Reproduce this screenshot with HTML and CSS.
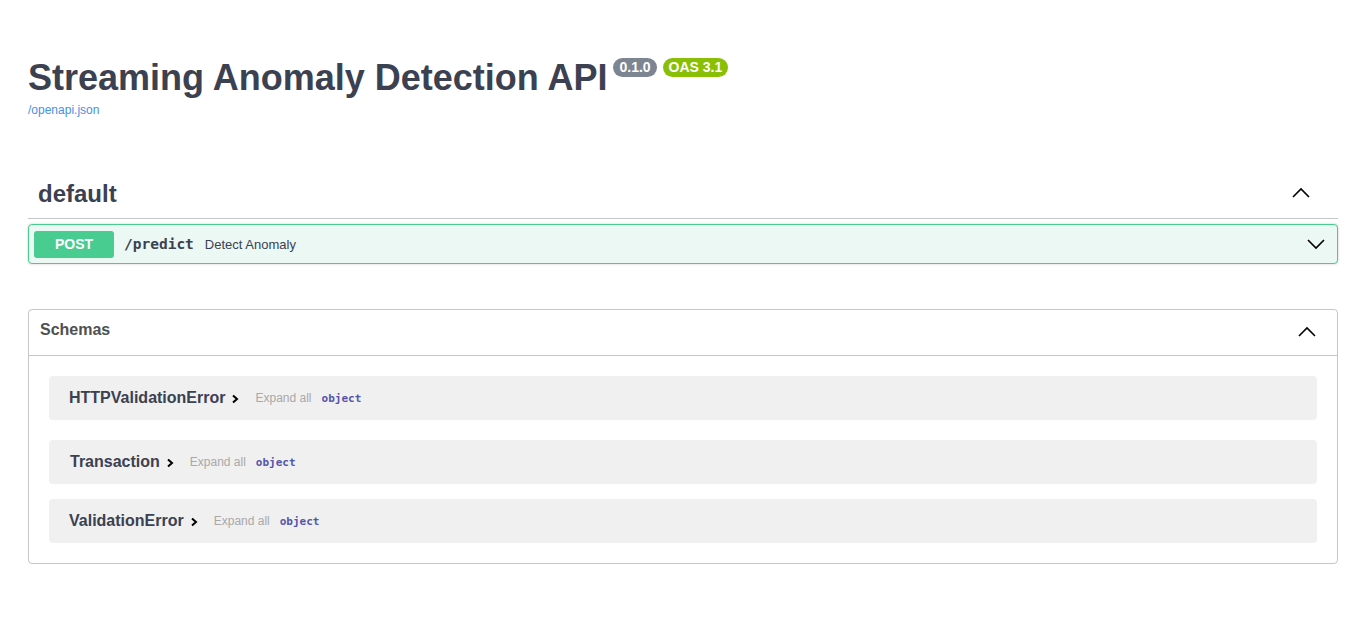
FILE: index.html
```html
<!DOCTYPE html>
<html>
<head>
<meta charset="utf-8">
<link rel="stylesheet" href="styles.css">
</head>
<body>
<div class="wrapper">
  <header class="info">
    <div class="title-row">
      <h1 class="title">Streaming Anomaly Detection API</h1>
      <span class="badge badge-version">0.1.0</span>
      <span class="badge badge-oas">OAS 3.1</span>
    </div>
    <a class="url" href="#">/openapi.json</a>
  </header>

  <section class="tag-section">
    <div class="tag-header">
      <h3 class="tag-name">default</h3>
      <svg class="chev" width="20" height="20" viewBox="0 0 20 20"><polyline points="2,14 10,6 18,14" fill="none" stroke="#000" stroke-width="1.6"/></svg>
    </div>
    <div class="opblock">
      <span class="method">POST</span>
      <span class="path">/predict</span>
      <span class="summary">Detect Anomaly</span>
      <svg class="chev chev-down" width="20" height="20" viewBox="0 0 20 20"><polyline points="2,6 10,14 18,6" fill="none" stroke="#000" stroke-width="1.6"/></svg>
    </div>
  </section>

  <section class="models">
    <div class="models-header">
      <h4 class="models-title">Schemas</h4>
      <svg class="chev" width="20" height="20" viewBox="0 0 20 20"><polyline points="2,14 10,6 18,14" fill="none" stroke="#000" stroke-width="1.6"/></svg>
    </div>
    <div class="models-body">
      <div class="model m1">
        <span class="model-name">HTTPValidationError</span>
        <svg class="arrow" width="8" height="10" viewBox="0 0 8 10"><polyline points="2,1.5 6,5 2,8.5" fill="none" stroke="#000" stroke-width="2"/></svg>
        <span class="expand">Expand all</span>
        <span class="type">object</span>
      </div>
      <div class="model m2">
        <span class="model-name">Transaction</span>
        <svg class="arrow" width="8" height="10" viewBox="0 0 8 10"><polyline points="2,1.5 6,5 2,8.5" fill="none" stroke="#000" stroke-width="2"/></svg>
        <span class="expand">Expand all</span>
        <span class="type">object</span>
      </div>
      <div class="model m3">
        <span class="model-name">ValidationError</span>
        <svg class="arrow" width="8" height="10" viewBox="0 0 8 10"><polyline points="2,1.5 6,5 2,8.5" fill="none" stroke="#000" stroke-width="2"/></svg>
        <span class="expand">Expand all</span>
        <span class="type">object</span>
      </div>
    </div>
  </section>
</div>
</body>
</html>
```

FILE: styles.css
```css
* { box-sizing: border-box; }
html, body { margin: 0; padding: 0; background: #fff; }
body { font-family: "Liberation Sans", Arial, sans-serif; color: #3b4151; }

.wrapper { padding: 0 28px; }

.info { padding-top: 57px; display: flex; flex-direction: column; align-items: flex-start; }
.title-row { display: flex; align-items: flex-start; gap: 6px; }
.title { margin: 0; font-size: 36px; font-weight: bold; line-height: 42px; color: #3b4151; }
.badge { margin-top: 1px; font-size: 14px; font-weight: bold; color: #fff; line-height: 19px; padding: 0 6px; border-radius: 10px; }
.badge-version { background: #7d8492; }
.badge-oas { background: #89bf04; }
.url { margin-top: 4px; font-size: 12px; color: #4990e2; text-decoration: none; line-height: 14px; }

.tag-section { margin-top: 56px; }
.tag-header { display: flex; align-items: center; justify-content: space-between; padding: 0 27px 4px 10px; border-bottom: 1px solid rgba(59,65,81,.3); height: 46px; }
.tag-name { margin: 0; font-size: 24px; font-weight: bold; color: #3b4151; }
.tag-header .chev { margin-top: -2px; }
.chev { display: block; }

.opblock { margin-top: 5px; display: flex; align-items: center; height: 40px; padding: 0 11px 0 5px; border: 1px solid #49cc90; background: #ecf8f3; border-radius: 4px; box-shadow: 0 0 3px rgba(0,0,0,.19); }
.method { width: 80px; height: 27px; display: flex; align-items: center; justify-content: center; background: #49cc90; color: #fff; border-radius: 3px; font-size: 14px; font-weight: bold; }
.path { margin-left: 10px; font-family: "DejaVu Sans Mono", monospace; font-weight: bold; font-size: 14.5px; color: #3b4151; }
.summary { margin-left: 11px; font-size: 13px; color: #3b4151; flex: 1; }

.models { margin-top: 45px; border: 1px solid rgba(59,65,81,.3); border-radius: 4px; }
.models-header { height: 46px; display: flex; align-items: center; justify-content: space-between; padding: 0 20px 6px 11px; border-bottom: 1px solid rgba(59,65,81,.3); }
.models-title { margin: 0; font-size: 16px; font-weight: bold; color: #505050; }
.models-header .chev { margin-top: 4px; }
.models-body { padding: 20px 20px 20px; display: flex; flex-direction: column; }
.model { display: flex; align-items: center; height: 44px; padding-left: 20px; background: #f0f0f0; border-radius: 4px; }
.m2 { margin-top: 20px; padding-left: 21px; }
.m3 { margin-top: 15px; }
.model-name { font-size: 16px; font-weight: bold; color: #3b4151; }
.arrow { margin-left: 6px; margin-top: 2px; }
.expand { margin-left: 16px; font-size: 12px; color: #a8a8a8; }
.type { margin-left: 10px; font-family: "DejaVu Sans Mono", monospace; font-weight: bold; font-size: 11px; color: #55a; }
```
